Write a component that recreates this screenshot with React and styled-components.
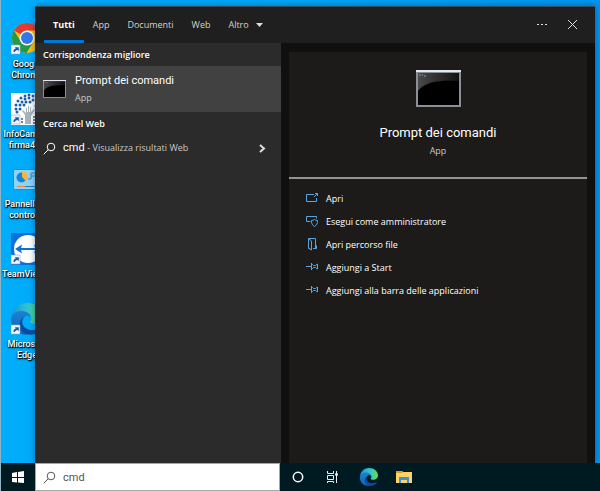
import React from 'react'
import styled, { createGlobalStyle } from 'styled-components'

const GlobalStyle = createGlobalStyle`
  * {
    box-sizing: border-box;
  }
  body {
    margin: 0;
    font-family: "Open Sans", "Noto Sans", sans-serif;
    font-size: 9px;
    font-weight: 500;
    color: #fff;
  }
  button, input {
    font: inherit;
    color: inherit;
  }
  button {
    display: flex;
    align-items: center;
    padding: 0;
    border: 0;
    background: none;
  }
  svg {
    display: block;
    flex: none;
  }
`

const Screen = styled.div`
  display: flex;
  flex-direction: column;
  height: 100vh;
  border-left: 1px solid #8fb4c6;
`

const Desktop = styled.main`
  position: relative;
  flex: 1;
  min-height: 0;
  overflow: hidden;
  background: linear-gradient(90deg, #00adfb, #00a6f5 50%, #0093ee);
`

const Shortcuts = styled.div`
  display: grid;
  grid-auto-rows: 70px;
  justify-content: start;
  padding-top: 23px;
`

const Shortcut = styled.button`
  flex-direction: column;
  justify-content: flex-start;
  width: 52px;
  font-family: Roboto, "Noto Sans", sans-serif;
  line-height: 11px;
  text-align: center;
  text-shadow: 0 1px 2px #000, 1px 1px 1px #000;
  svg {
    margin-bottom: 4px;
  }
`

const Panel = styled.section`
  position: absolute;
  top: 6px;
  right: 5px;
  bottom: 0;
  left: 34px;
  display: flex;
  flex-direction: column;
  border-top: 1px solid #3a4c55;
  background: #2b2b2b;
  box-shadow: 0 0 6px rgba(0, 40, 90, 0.5);
`

const Header = styled.header`
  display: flex;
  justify-content: space-between;
  height: 36px;
  padding: 0 16px 0 9px;
  background: #1f1f1f;
`

const Group = styled.div`
  display: flex;
  gap: ${p => p.$gap || 0}px;
`

const Tab = styled.button`
  gap: 7px;
  padding: 2px 9px 0;
  border-bottom: 3px solid ${p => (p.$active ? '#0078d7' : 'transparent')};
  font-weight: ${p => (p.$active ? 700 : 500)};
  color: ${p => (p.$active ? '#fff' : '#d2d2d2')};
`

const Columns = styled.div`
  display: grid;
  grid-template-columns: 246px 1fr;
  flex: 1;
`

const Heading = styled.h2`
  margin: 0;
  padding: 1px 0 0 8px;
  font-size: 9px;
  font-weight: 600;
  line-height: 22px;
`

const Result = styled.button`
  width: 100%;
  height: ${p => (p.$selected ? 46 : 26)}px;
  gap: ${p => (p.$selected ? 9 : 7)}px;
  padding: 0 15px 0 8px;
  background: ${p => (p.$selected ? '#414141' : 'none')};
  text-align: left;
`

const ResultText = styled.span`
  flex: 1;
  font-family: Roboto, "Noto Sans", sans-serif;
  font-size: 11px;
  font-weight: 400;
  line-height: 18px;
`

const Hint = styled.span`
  font-family: "Open Sans", "Noto Sans", sans-serif;
  font-size: 9px;
  font-weight: 500;
  line-height: 16px;
  color: #c8c8c8;
`

const Block = styled(Hint)`
  display: block;
`

const Details = styled.div`
  display: flex;
  padding: 9px 8px 0;
  background: #11100f;
`

const Card = styled.article`
  flex: 1;
  background: #1c1b19;
`

const Summary = styled.div`
  display: flex;
  flex-direction: column;
  align-items: center;
  height: 127px;
  padding-top: 18px;
  border-bottom: 2px solid #959493;
`

const Title = styled.h1`
  margin: 16px 0 0;
  font-family: Roboto, "Noto Sans", sans-serif;
  font-size: 13px;
  font-weight: 400;
  line-height: 20px;
`

const Actions = styled.div`
  display: grid;
  grid-auto-rows: 23px;
  padding: 8px 17px;
`

const Action = styled.button`
  gap: 7px;
`

const Taskbar = styled.footer`
  display: flex;
  align-items: center;
  height: 28px;
  background: #001a22;
`

const TaskButton = styled.button`
  justify-content: center;
  width: ${p => p.$width || 35}px;
  height: 28px;
`

const Search = styled.label`
  display: flex;
  align-items: center;
  gap: 7px;
  width: 245px;
  height: 28px;
  padding: 0 7px;
  border: 1px solid #a6a6a6;
  background: #fff;
  color: #555;
`

const SearchInput = styled.input`
  flex: 1;
  min-width: 0;
  padding: 0;
  border: 0;
  outline: 0;
  background: none;
  font-family: Roboto, "Noto Sans", sans-serif;
  font-size: 11px;
  font-weight: 400;
`

const Arrow = () => (
  <g>
    <path d="M0 22h9v9H0z" fill="#f4f7fb" stroke="#9aa9b8" strokeWidth=".6" />
    <path d="M2.500 29c0-2 .5-3 2.300-3.600l-1-1.200h4v4l-1.200-1.100C5 27.500 4 28 4 29z" fill="#1c57a8" />
  </g>
)

const ChromeIcon = () => (
  <svg width="32" height="32" viewBox="0 0 32 32">
    <circle cx="16" cy="15" r="15" fill="#fbc116" />
    <path d="M16 15 3 7.500A15 15 0 0 1 29 7.500H16z" fill="#e33b2e" />
    <path d="M3 7.500A15 15 0 0 0 15.500 30l7-11.500L16 15l-6.500 3z" fill="#249a46" />
    <circle cx="16" cy="15" r="7.500" fill="#fff" />
    <circle cx="16" cy="15" r="6" fill="#3577e5" />
    <Arrow />
  </svg>
)

const dots = [
  [14, 3], [18, 2], [22, 3], [10, 5], [14, 6], [18, 5], [7, 8], [11, 9],
  [15, 9], [5, 12], [9, 12], [13, 12], [5, 16], [9, 16], [6, 19], [22, 7],
  [19, 9], [26, 5], [26, 9], [29, 13], [25, 13],
]

const InfoCamereIcon = () => (
  <svg width="32" height="32" viewBox="0 0 32 32">
    <path d="M0 0h32v32H0z" fill="#fff" />
    {dots.map(([x, y]) => (
      <circle key={`${x}-${y}`} cx={x} cy={y} r="1.500" fill="#1f5fa8" />
    ))}
    <path d="M14 31V22l-3-4 1-1 3 3v-5h1v4h1v-6h1v6h1v-5h1v5l3-3 1 1-4 6v8z" fill="#a9b3bb" />
    <path d="M11 25v6M23 23v8" stroke="#75838e" strokeWidth="2" strokeDasharray="2 1" />
    <Arrow />
  </svg>
)

const ControlPanelIcon = () => (
  <svg width="32" height="32" viewBox="0 0 32 32">
    <path d="M2.500 6.500h28v20h-28z" fill="#8fd3f8" stroke="#4386ad" />
    <circle cx="10.500" cy="14.500" r="5" fill="#1684d8" />
    <path d="M11 14V8.500a5.500 5.500 0 0 1 4 9.500z" fill="#f8b53b" />
    <path d="M17 16h3v-6h5M20 13h5" fill="none" stroke="#2e86ba" />
    <path d="M6 23.500h8" stroke="#ef8a3b" />
    <path d="M14 23.500h14" stroke="#277fb4" />
  </svg>
)

const TeamViewerIcon = () => (
  <svg width="32" height="32" viewBox="0 0 32 32">
    <path d="M0 0h32v32H0z" fill="#0d70d8" />
    <circle cx="17" cy="16" r="14" fill="#fff" />
    <path d="m4 16 7-4.500-1 3.500h14l-1-3.500 7 4.500-7 4.500 1-3.500H10l1 3.500z" fill="#0d70d8" />
    <Arrow />
  </svg>
)

const EdgeIcon = ({ size = 32, id, shortcut }) => (
  <svg width={size} height={size} viewBox="0 0 32 32">
    <defs>
      <linearGradient id={`${id}-top`} x1="0" x2="1">
        <stop offset="0" stopColor="#1692d8" />
        <stop offset=".5" stopColor="#2fc3d4" />
        <stop offset="1" stopColor="#66dd50" />
      </linearGradient>
      <linearGradient id={`${id}-side`} x1="0" y1="0" x2="0" y2="1">
        <stop offset="0" stopColor="#1b82cf" />
        <stop offset="1" stopColor="#0866bd" />
      </linearGradient>
    </defs>
    <path d="M0 15C1 6 8 0 16 0c9 0 16 6 16 13 0 5-4 8-8 8-3 0-5-1-5-2s2-2 1-5c-2-5-12-8-20 1z" fill={`url(#${id}-top)`} />
    <path d="M0 16c1-5 5-8 10-8 6 0 10 3 10 7-1-2-3-3-5-2-7 4-4 15 3 18-10 3-19-5-18-15z" fill={`url(#${id}-side)`} />
    <path d="M13 14c-5 6 1 14 9 13 3 0 5-1 7-2 1 0 1 1 0 2-4 5-11 6-16 3-6-4-6-13 0-16z" fill="#0c4b9e" />
    {shortcut && <Arrow />}
  </svg>
)

const PromptIcon = ({ width, height, id }) => (
  <svg width={width} height={height} viewBox="0 0 45 37" preserveAspectRatio="none">
    <defs>
      <linearGradient id={id} x1="0" x2="1">
        <stop offset="0" stopColor="#4a4a4a" />
        <stop offset="1" stopColor="#111" />
      </linearGradient>
    </defs>
    <path d="M0 0h45v37H0z" fill="#8b8f99" />
    <path d="M0 0h45v2H0z" fill="#e4e7f2" />
    <path d="M2 3h41v32H2z" />
    <path d="M2 3h41v8C26 10 9 11 2 21z" fill={`url(#${id})`} />
    <path d="M3 5h2m1 0h1m1 1h2" stroke="#999" />
  </svg>
)

const SearchIcon = () => (
  <svg width="13" height="13" viewBox="0 0 13 13" fill="none" stroke="currentColor">
    <circle cx="8" cy="5" r="3.800" />
    <path d="m5.300 7.700-4.600 4.600" />
  </svg>
)

const actionIcons = {
  open: <path d="M8 2.500H.5v7h10V6M8 5l3.500-3.500M9 1.500h2.500V4" />,
  admin: (
    <>
      <path d="M4.500 6.500h-4v-5h10v2" />
      <path d="M8.500 4.500c-1 .8-2 1-3 1 0 3 .5 4.500 3 6 2.500-1.500 3-3 3-6-1 0-2-.2-3-1z" />
    </>
  ),
  folder: <path d="M4 10.500H2.500V.5h7v10H7M3 1l2.500 2v9L3 10.500M8.500 10.500h2v-3" />,
  pin: <path d="M0 5.500h5M5.500 2v7M5.500 3.500h1l1 1h2l2-1.500v5l-2-1.500h-2l-1 1h-1" />,
}

const shortcuts = [
  { icon: <ChromeIcon />, lines: ['Google', 'Chrome'] },
  { icon: <InfoCamereIcon />, lines: ['InfoCamere', 'firma4ng'] },
  { icon: <ControlPanelIcon />, lines: ['Pannello di', 'controllo'] },
  { icon: <TeamViewerIcon />, lines: ['TeamViewer'] },
  { icon: <EdgeIcon id="desk" shortcut />, lines: ['Microsoft', 'Edge'] },
]

const actions = [
  ['open', 'Apri'],
  ['admin', 'Esegui come amministratore'],
  ['folder', 'Apri percorso file'],
  ['pin', 'Aggiungi a Start'],
  ['pin', 'Aggiungi alla barra delle applicazioni'],
]

const SearchPanel = () => (
  <Panel>
    <Header>
      <Group as="nav">
        <Tab $active>Tutti</Tab>
        <Tab>App</Tab>
        <Tab>Documenti</Tab>
        <Tab>Web</Tab>
        <Tab>
          Altro
          <svg width="7" height="4"><path d="M0 0h7L3.500 4z" fill="#ddd" /></svg>
        </Tab>
      </Group>
      <Group $gap={19}>
        <button aria-label="Opzioni">
          <svg width="12" height="12" fill="#ddd">
            <path d="M1 5h2v1H1zM5 5h2v1H5zM9 5h2v1H9z" />
          </svg>
        </button>
        <button aria-label="Chiudi">
          <svg width="12" height="12" stroke="#ddd"><path d="m1 1 9 9M10 1l-9 9" /></svg>
        </button>
      </Group>
    </Header>
    <Columns>
      <div>
        <Heading>Corrispondenza migliore</Heading>
        <Result $selected>
          <PromptIcon width={23} height={18} id="prompt-small" />
          <ResultText>
            Prompt dei comandi
            <Block>App</Block>
          </ResultText>
        </Result>
        <Heading>Cerca nel Web</Heading>
        <Result>
          <SearchIcon />
          <ResultText>cmd <Hint>- Visualizza risultati Web</Hint></ResultText>
          <svg width="7" height="9" fill="none" stroke="#ddd" strokeWidth="2">
            <path d="m1 1 4 3.500L1 8" />
          </svg>
        </Result>
      </div>
      <Details>
        <Card>
          <Summary>
            <PromptIcon width={45} height={37} id="prompt-large" />
            <Title>Prompt dei comandi</Title>
            <Hint>App</Hint>
          </Summary>
          <Actions>
            {actions.map(([icon, label]) => (
              <Action key={label}>
                <svg width="13" height="13" viewBox="0 0 13 13" fill="none" stroke="#5aa5e0">
                  {actionIcons[icon]}
                </svg>
                {label}
              </Action>
            ))}
          </Actions>
        </Card>
      </Details>
    </Columns>
  </Panel>
)

const App = () => (
  <Screen>
    <GlobalStyle />
    <Desktop>
      <Shortcuts>
        {shortcuts.map(({ icon, lines }) => (
          <Shortcut key={lines[0]}>
            {icon}
            {lines.map(line => <span key={line}>{line}</span>)}
          </Shortcut>
        ))}
      </Shortcuts>
      <SearchPanel />
    </Desktop>
    <Taskbar>
      <TaskButton $width={34} aria-label="Start">
        <svg width="12" height="12" fill="#fff">
          <path d="M0 2l5-1v5H0zM6 1l6-1v6H6zM0 7h5v4.500L0 11zM6 7h6v5l-6-.5z" />
        </svg>
      </TaskButton>
      <Search>
        <SearchIcon />
        <SearchInput type="text" aria-label="Cerca" defaultValue="cmd" />
      </Search>
      <TaskButton aria-label="Cortana">
        <svg width="12" height="12" fill="none" stroke="#fff" strokeWidth="1.500">
          <circle cx="6" cy="6" r="4.700" />
        </svg>
      </TaskButton>
      <TaskButton aria-label="Visualizzazione attività">
        <svg width="13" height="12" fill="none" stroke="#eee">
          <path d="M1.500 0v2.500h6V0M1.500 4.500h6v4h-6zM1.500 12v-1.500h6V12M10.500 0v12" />
          <path d="M9 3.500h3" strokeWidth="2" />
        </svg>
      </TaskButton>
      <TaskButton $width={37} aria-label="Microsoft Edge">
        <EdgeIcon size={18} id="bar" />
      </TaskButton>
      <TaskButton $width={34} aria-label="Esplora file">
        <svg width="16" height="14">
          <path d="M0 1h6l1 1h9v11H0z" fill="#ffd363" />
          <path d="M0 1h6l1 1-1 1H0z" fill="#e09c1b" />
          <path d="M3 13V7h10v6h-2v-3H5v3z" fill="#3b91dc" />
        </svg>
      </TaskButton>
    </Taskbar>
  </Screen>
)

export default App
